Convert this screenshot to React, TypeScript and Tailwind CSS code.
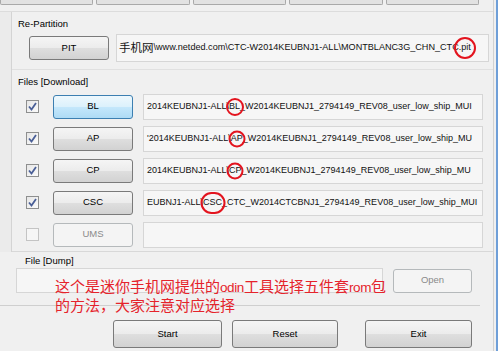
import React from 'react';

const font = { fontFamily: '"Liberation Sans", Arial, sans-serif' };

interface FileRow {
  label: string;
  pre: string;
  mark: string;
  post: string;
  circle: string;
  checked: boolean;
  disabled?: boolean;
  active?: boolean;
}

const rows: FileRow[] = [
  {
    label: 'BL',
    pre: '2014KEUBNJ1-ALL\\',
    mark: 'BL',
    post: '_W2014KEUBNJ1_2794149_REV08_user_low_ship_MUI',
    circle: 'w-[18px] h-[18px]',
    checked: true,
    active: true,
  },
  {
    label: 'AP',
    pre: "'2014KEUBNJ1-ALL\\",
    mark: 'AP',
    post: '_W2014KEUBNJ1_2794149_REV08_user_low_ship_MU',
    circle: 'w-[17px] h-[17px]',
    checked: true,
  },
  {
    label: 'CP',
    pre: '2014KEUBNJ1-ALL\\',
    mark: 'CP',
    post: '_W2014KEUBNJ1_2794149_REV08_user_low_ship_MU',
    circle: 'w-[17px] h-[17px]',
    checked: true,
  },
  {
    label: 'CSC',
    pre: 'EUBNJ1-ALL\\',
    mark: 'CSC',
    post: '_CTC_W2014CTCBNJ1_2794149_REV08_user_low_ship_MUI',
    circle: 'w-[25px] h-[22px]',
    checked: true,
  },
  {
    label: 'UMS',
    pre: '',
    mark: '',
    post: '',
    circle: '',
    checked: false,
    disabled: true,
  },
];

const btnNormal =
  'border border-[#7a7a7a] rounded-[3px] bg-[linear-gradient(to_bottom,#f5f5f5_0%,#ececec_48%,#dedede_52%,#d2d2d2_100%)] text-black';
const btnActive =
  'border border-[#3c7fb1] rounded-[3px] bg-[linear-gradient(to_bottom,#eef8fd_0%,#dcf1fc_48%,#c4e7fb_52%,#aedbf5_100%)] text-black';
const btnDisabled =
  'border border-[#b5b9bb] rounded-[3px] bg-[#f4f4f4] text-[#8a8a8a]';

function Circle({ size }: { size: string }) {
  return (
    <span
      className={`absolute left-1/2 top-1/2 -translate-x-1/2 -translate-y-1/2 rounded-full border-2 border-[#e3141e] ${size}`}
    />
  );
}

function Marked({ text, size }: { text: string; size: string }) {
  return (
    <span className="relative">
      {text}
      <Circle size={size} />
    </span>
  );
}

function CheckBox({ checked, disabled }: { checked: boolean; disabled?: boolean }) {
  return (
    <div
      className={`w-[13px] h-[13px] border flex items-center justify-center ${
        disabled
          ? 'border-[#c4c4c4] bg-[#f6f6f6]'
          : 'border-[#8e8f8f] bg-[linear-gradient(135deg,#e6e6e6,#fbfbfb)]'
      }`}
    >
      {checked && (
        <svg width="9" height="9" viewBox="0 0 9 9">
          <path d="M1 4.5 L3.5 7.5 L8 1" fill="none" stroke="#4a5f97" strokeWidth="1.8" />
        </svg>
      )}
    </div>
  );
}

function Field({ children, className }: { children?: React.ReactNode; className: string }) {
  return (
    <div
      className={`border border-[#d6d6d6] bg-[#f6f6f6] overflow-hidden whitespace-nowrap flex items-center text-[#111] ${className}`}
    >
      {children}
    </div>
  );
}

export default function App() {
  return (
    <div className="w-[500px] h-[351px] overflow-hidden bg-[#f0f0f0] flex relative text-[9.5px] text-black" style={font}>
      <div className="w-[493px] flex flex-col">
        {/* bottoms of the buttons above, cut off */}
        <div className="h-[5px] flex gap-[3px] pr-[14px]">
          {[0, 1, 2, 3, 4].map((i) => (
            <div key={i} className="flex-1 border border-t-0 border-[#a9a9a9] rounded-b-[2px] bg-[#e2e2e2]" />
          ))}
        </div>
        <div className="h-[7px] border-b border-[#dcdcdc]" />

        <div className="flex">
          <div className="w-[12px] bg-[#ebebeb] border-r border-[#d4d4d4]" />
          <div className="flex-1 flex flex-col">
            {/* Re-Partition */}
            <div className="mt-[5px] border-b border-[#e0e0e0] pb-[7px]">
              <div className="h-[14px] pl-[6px] leading-[14px]">Re-Partition</div>
              <div className="flex items-center pl-[17px] pr-[4px] mt-[3px]">
                <div className={`w-[80px] h-[24px] flex items-center justify-center ${btnNormal}`}>PIT</div>
                <Field className="ml-[7px] flex-1 h-[28px] pl-[2px] text-[9.1px]">
                  <span className="text-[11.5px]" style={{ fontFamily: '"Noto Sans CJK SC", sans-serif' }}>
                    手机网
                  </span>
                  <span>\www.netded.com\CTC-W2014KEUBNJ1-ALL\MONTBLANC3G_CHN_CTC</span>
                  <Marked text=".pit" size="w-[22px] h-[22px]" />
                </Field>
              </div>
            </div>

            {/* Files [Download] */}
            <div className="mt-[3px] border-b border-[#d8d8d8] pb-[4px]">
              <div className="h-[14px] pl-[6px] leading-[14px] mt-[2px]">Files [Download]</div>
              <div className="flex flex-col gap-[7px] mt-[5px]">
                {rows.map((r) => (
                  <div key={r.label} className="flex items-center h-[25px] pl-[14px] pr-[10px]">
                    <CheckBox checked={r.checked} disabled={r.disabled} />
                    <div
                      className={`ml-[14px] w-[80px] h-[24px] flex items-center justify-center ${
                        r.disabled ? btnDisabled : r.active ? btnActive : btnNormal
                      }`}
                    >
                      {r.label}
                    </div>
                    <Field className="ml-[10px] flex-1 h-[26px] pl-[3px] text-[9px]">
                      {r.pre}
                      {r.mark && <Marked text={r.mark} size={r.circle} />}
                      {r.post}
                    </Field>
                  </div>
                ))}
              </div>
            </div>
          </div>
        </div>

        {/* File [Dump] */}
        <div className="pl-[25px] mt-[2px] h-[14px] leading-[14px]">File [Dump]</div>
        <div className="flex items-center pl-[16px]">
          <Field className="w-[367px] h-[25px]" />
          <div className={`ml-[10px] w-[79px] h-[24px] flex items-center justify-center ${btnDisabled}`}>Open</div>
        </div>
        <div className="mt-[12px] border-t border-[#cfcfcf] mr-[13px]" />
        <div className="flex mt-[14px] pl-[113px]">
          <div className={`w-[109px] h-[28px] flex items-center justify-center ${btnNormal}`}>Start</div>
          <div className={`ml-[10px] w-[106px] h-[28px] flex items-center justify-center ${btnNormal}`}>Reset</div>
          <div className={`ml-[27px] w-[107px] h-[28px] flex items-center justify-center ${btnNormal}`}>Exit</div>
        </div>
      </div>

      {/* window edge */}
      <div className="flex-1 flex border-l border-[#d2d2d2]">
        <div className="w-[2px]" />
        <div className="w-[2px] bg-[#6f9fd8]" />
        <div className="flex-1 bg-white" />
      </div>

      {/* red annotation laid over the dump box */}
      <div
        className="absolute left-[55px] top-[277px] text-[15px] leading-[17px] text-[#e5232b] whitespace-nowrap"
        style={{ fontFamily: '"Noto Sans CJK SC", "Noto Sans", sans-serif' }}
      >
        <div>
          这个是迷你手机网提供的
          <span className="text-[13.5px] tracking-[-0.4px]" style={font}>odin</span>
          工具选择五件套
          <span className="text-[13.5px] tracking-[-0.4px]" style={font}>rom</span>
          包
        </div>
        <div>的方法，大家注意对应选择</div>
      </div>
    </div>
  );
}
